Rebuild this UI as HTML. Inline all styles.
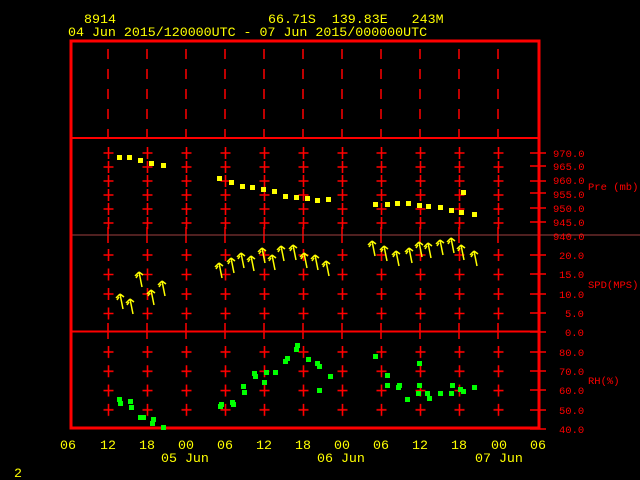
<!DOCTYPE html>
<html><head><meta charset="utf-8"><style>
html,body{margin:0;padding:0;background:#000;width:640px;height:480px;overflow:hidden}
svg{display:block}
text{font-family:"Liberation Mono",monospace;white-space:pre}
.y{fill:#ffff00;font-size:13.3px}
.r{fill:#ff0000;font-size:10.5px}
</style></head><body>
<svg width="640" height="480" viewBox="0 0 640 480">
<defs>
<pattern id="pP" x="89" y="146" width="39" height="14" patternUnits="userSpaceOnUse">
<path d="M19.5,1V13M14.5,7H24.5" stroke="#f00" stroke-width="1.6" fill="none"/></pattern>
<pattern id="pS" x="89" y="245.5" width="39" height="19.5" patternUnits="userSpaceOnUse">
<path d="M19.5,3.5V15.5M14.5,9.5H24.5" stroke="#f00" stroke-width="1.6" fill="none"/></pattern>
<pattern id="pR" x="89" y="342.5" width="39" height="19.3" patternUnits="userSpaceOnUse">
<path d="M19.5,3.5V15.5M14.5,9.5H24.5" stroke="#f00" stroke-width="1.6" fill="none"/></pattern>
<path id="ar" d="M0,0L3,15M0,0L-4,4M0,0L4,3M-1,3L-3,6" stroke="#ff0" stroke-width="1.5" fill="none"/>
</defs>
<text class="y" x="84" y="23">8914</text>
<text class="y" x="268" y="23" xml:space="preserve">66.71S  139.83E   243M</text>
<text class="y" x="68" y="36">04 Jun 2015/120000UTC - 07 Jun 2015/000000UTC</text>
<g stroke="#f00" stroke-width="1.5" stroke-dasharray="10 10">
<path d="M108,49V138M147,49V138M186,49V138M225,49V138M264,49V138M303,49V138M342,49V138M381,49V138M420,49V138M459,49V138M498,49V138"/>
</g>
<rect x="89" y="146" width="429" height="84" fill="url(#pP)"/>
<rect x="89" y="245.5" width="429" height="78" fill="url(#pS)"/>
<rect x="89" y="342.5" width="429" height="77.2" fill="url(#pR)"/>
<g stroke="#f00" stroke-width="1.5">
<path d="M108,227V243M147,227V243M186,227V243M225,227V243M264,227V243M303,227V243M342,227V243M381,227V243M420,227V243M459,227V243M498,227V243"/>
<path d="M108,323V339M147,323V339M186,323V339M225,323V339M264,323V339M303,323V339M342,323V339M381,323V339M420,323V339M459,323V339M498,323V339"/>
<path d="M530,153H546M530,166H546M530,181H546M530,193H546M530,208H546M530,222H546M530,255H546M530,274H546M530,294H546M530,313H546M530,332H546M530,352H546M530,371H546M530,390H546M530,410H546M530,429H546"/>
</g>
<path d="M72,235H640" stroke="#a04040" stroke-width="1"/>
<path d="M72,138H540M72,331.5H540" stroke="#f00" stroke-width="2"/>
<rect x="71" y="41" width="468" height="387" fill="none" stroke="#f00" stroke-width="3"/>
<g fill="#ff0">
<rect x="117" y="155" width="5" height="5"/><rect x="127" y="155" width="5" height="5"/><rect x="138" y="158" width="5" height="5"/><rect x="149" y="161" width="5" height="5"/><rect x="161" y="163" width="5" height="5"/>
<rect x="217" y="176" width="5" height="5"/><rect x="229" y="180" width="5" height="5"/><rect x="240" y="184" width="5" height="5"/><rect x="250" y="185" width="5" height="5"/><rect x="261" y="187" width="5" height="5"/><rect x="272" y="189" width="5" height="5"/><rect x="283" y="194" width="5" height="5"/><rect x="294" y="195" width="5" height="5"/><rect x="305" y="196" width="5" height="5"/><rect x="315" y="198" width="5" height="5"/><rect x="326" y="197" width="5" height="5"/>
<rect x="373" y="202" width="5" height="5"/><rect x="385" y="202" width="5" height="5"/><rect x="395" y="201" width="5" height="5"/><rect x="406" y="201" width="5" height="5"/><rect x="417" y="203" width="5" height="5"/><rect x="426" y="204" width="5" height="5"/><rect x="438" y="205" width="5" height="5"/><rect x="449" y="208" width="5" height="5"/><rect x="459" y="210" width="5" height="5"/><rect x="472" y="212" width="5" height="5"/><rect x="461" y="190" width="5" height="5"/>
</g>
<g>
<use href="#ar" x="120" y="294"/><use href="#ar" x="130" y="299"/><use href="#ar" x="139" y="272"/><use href="#ar" x="151" y="290"/><use href="#ar" x="162" y="281"/>
<use href="#ar" x="219" y="263"/><use href="#ar" x="231" y="258"/><use href="#ar" x="241" y="253"/><use href="#ar" x="251" y="256"/><use href="#ar" x="262" y="248"/><use href="#ar" x="272" y="255"/><use href="#ar" x="281" y="246"/><use href="#ar" x="293" y="245"/><use href="#ar" x="304" y="253"/><use href="#ar" x="315" y="255"/><use href="#ar" x="326" y="261"/>
<use href="#ar" x="372" y="241"/><use href="#ar" x="384" y="246"/><use href="#ar" x="396" y="251"/><use href="#ar" x="409" y="248"/><use href="#ar" x="419" y="242"/><use href="#ar" x="428" y="243"/><use href="#ar" x="440" y="240"/><use href="#ar" x="451" y="238"/><use href="#ar" x="461" y="245"/><use href="#ar" x="474" y="251"/>
</g>
<g fill="#00ff00">
<rect x="117" y="397" width="5" height="5"/><rect x="118" y="401" width="5" height="5"/><rect x="128" y="399" width="5" height="5"/><rect x="129" y="405" width="5" height="5"/><rect x="138" y="415" width="5" height="5"/><rect x="141" y="415" width="5" height="5"/><rect x="151" y="417" width="5" height="5"/><rect x="150" y="421" width="5" height="5"/><rect x="161" y="425" width="5" height="5"/>
<rect x="218" y="404" width="5" height="5"/><rect x="219" y="402" width="5" height="5"/><rect x="230" y="400" width="5" height="5"/><rect x="231" y="402" width="5" height="5"/><rect x="241" y="384" width="5" height="5"/><rect x="242" y="390" width="5" height="5"/><rect x="252" y="371" width="5" height="5"/><rect x="253" y="374" width="5" height="5"/><rect x="262" y="380" width="5" height="5"/><rect x="264" y="370" width="5" height="5"/><rect x="273" y="370" width="5" height="5"/><rect x="283" y="359" width="5" height="5"/><rect x="285" y="356" width="5" height="5"/><rect x="294" y="347" width="5" height="5"/><rect x="295" y="343" width="5" height="5"/><rect x="306" y="357" width="5" height="5"/><rect x="315" y="361" width="5" height="5"/><rect x="317" y="364" width="5" height="5"/><rect x="317" y="388" width="5" height="5"/><rect x="328" y="374" width="5" height="5"/>
<rect x="373" y="354" width="5" height="5"/><rect x="385" y="373" width="5" height="5"/><rect x="385" y="383" width="5" height="5"/><rect x="396" y="385" width="5" height="5"/><rect x="397" y="383" width="5" height="5"/><rect x="405" y="397" width="5" height="5"/><rect x="417" y="361" width="5" height="5"/><rect x="417" y="383" width="5" height="5"/><rect x="416" y="391" width="5" height="5"/><rect x="425" y="391" width="5" height="5"/><rect x="427" y="396" width="5" height="5"/><rect x="438" y="391" width="5" height="5"/><rect x="449" y="391" width="5" height="5"/><rect x="450" y="383" width="5" height="5"/><rect x="458" y="387" width="5" height="5"/><rect x="461" y="389" width="5" height="5"/><rect x="472" y="385" width="5" height="5"/>
</g>
<g class="r">
<text x="553" y="157">970.0</text><text x="553" y="170">965.0</text><text x="553" y="184">960.0</text><text x="553" y="198">955.0</text><text x="553" y="212">950.0</text><text x="553" y="226">945.0</text><text x="553" y="240">940.0</text>
<text x="559" y="259">20.0</text><text x="559" y="278">15.0</text><text x="559" y="298">10.0</text><text x="565" y="317">5.0</text><text x="565" y="336">0.0</text>
<text x="559" y="356">80.0</text><text x="559" y="375">70.0</text><text x="559" y="394">60.0</text><text x="559" y="414">50.0</text><text x="559" y="433">40.0</text>
<text x="588" y="190">Pre (mb)</text><text x="588" y="288">SPD(MPS)</text><text x="588" y="384">RH(%)</text>
</g>
<g class="y">
<text x="60" y="449">06</text><text x="100" y="449">12</text><text x="139" y="449">18</text><text x="178" y="449">00</text><text x="217" y="449">06</text><text x="256" y="449">12</text><text x="295" y="449">18</text><text x="334" y="449">00</text><text x="373" y="449">06</text><text x="412" y="449">12</text><text x="451" y="449">18</text><text x="491" y="449">00</text><text x="530" y="449">06</text>
<text x="161" y="462">05 Jun</text><text x="317" y="462">06 Jun</text><text x="475" y="462">07 Jun</text>
<text x="14" y="477">2</text>
</g>
</svg>
</body></html>
